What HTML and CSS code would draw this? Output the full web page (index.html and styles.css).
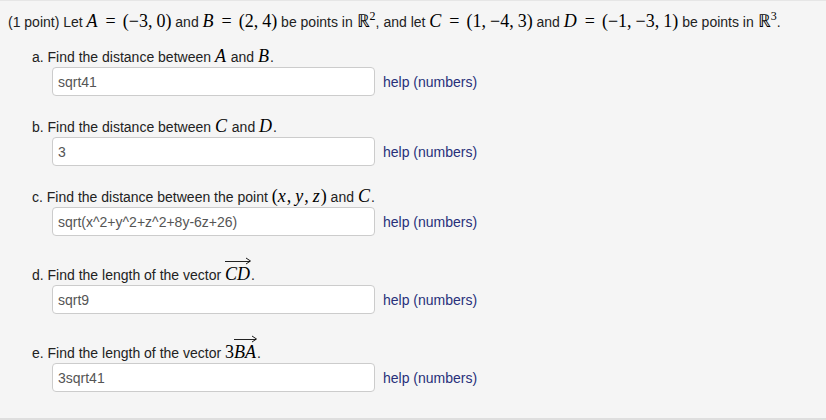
FILE: index.html
```html
<!DOCTYPE html>
<html lang="en">
<head>
  <meta charset="UTF-8">
  <title>Distance and Vectors</title>
  <link rel="stylesheet" href="styles.css">
</head>
<body>

  <div class="problem">

    <!-- Problem statement -->
    <div class="intro">
      (1 point) Let <span class="m"><i>A</i><span class="op">=</span>(−3,<span class="sp"></span>0)</span> and
      <span class="m"><i>B</i><span class="op">=</span>(2,<span class="sp"></span>4)</span> be points in
      <span class="m">ℝ<sup>2</sup></span>, and let
      <span class="m"><i>C</i><span class="op">=</span>(1,<span class="sp"></span>−4,<span class="sp"></span>3)</span> and
      <span class="m"><i>D</i><span class="op">=</span>(−1,<span class="sp"></span>−3,<span class="sp"></span>1)</span> be points in
      <span class="m">ℝ<sup>3</sup></span>.
    </div>

    <div class="parts">

      <div class="part">
        <div class="label">a. Find the distance between <span class="m"><i>A</i></span> and <span class="m"><i>B</i></span>.</div>
        <div class="answer">
          <input class="box" type="text" value="sqrt41">
          <span class="help">help (numbers)</span>
        </div>
      </div>

      <div class="part">
        <div class="label">b. Find the distance between <span class="m"><i>C</i></span> and <span class="m"><i>D</i></span>.</div>
        <div class="answer">
          <input class="box" type="text" value="3">
          <span class="help">help (numbers)</span>
        </div>
      </div>

      <div class="part">
        <div class="label">c. Find the distance between the point <span class="m">(<i>x</i>,<span class="sp"></span><i>y</i>,<span class="sp"></span><i>z</i>)</span> and <span class="m"><i>C</i></span>.</div>
        <div class="answer">
          <input class="box" type="text" value="sqrt(x^2+y^2+z^2+8y-6z+26)">
          <span class="help">help (numbers)</span>
        </div>
      </div>

      <div class="part">
        <div class="label">d. Find the length of the vector <span class="m vec"><span class="arrow"><span class="shaft"></span><svg width="5" height="8" viewBox="0 0 5 8"><path d="M0 1l4.5 3L0 7" fill="none" stroke="#000" stroke-width="0.9"/></svg></span><span class="vec-text"><i>CD</i></span></span>.</div>
        <div class="answer">
          <input class="box" type="text" value="sqrt9">
          <span class="help">help (numbers)</span>
        </div>
      </div>

      <div class="part">
        <div class="label">e. Find the length of the vector <span class="m">3<span class="vec"><span class="arrow"><span class="shaft"></span><svg width="5" height="8" viewBox="0 0 5 8"><path d="M0 1l4.5 3L0 7" fill="none" stroke="#000" stroke-width="0.9"/></svg></span><span class="vec-text"><i>BA</i></span></span></span>.</div>
        <div class="answer">
          <input class="box" type="text" value="3sqrt41">
          <span class="help">help (numbers)</span>
        </div>
      </div>

    </div>
  </div>

</body>
</html>
```

FILE: styles.css
```css
body {
  margin: 0;
  background-color: #f5f5f5;
  font-family: "Liberation Sans", Arial, sans-serif;
  font-size: 14px;
  color: #222;
}
.problem {
  height: 406px;
  padding: 11px 8px 0;
  border-top: 1px solid #e6e6e6;
  border-bottom: 2px solid #dedede;
}
.intro {
  line-height: 20px;
}
.parts {
  margin-top: 15px;
  padding-left: 24px;
}
.part {
  margin-bottom: 21px;
}
.label {
  line-height: 20px;
}
.m {
  font-family: "Liberation Serif", "Times New Roman", serif;
  font-size: 18px;
  line-height: 1;
  color: #000;
  white-space: nowrap;
}
.m i {
  font-style: italic;
  padding-right: 1px;
}
.op {
  padding: 0 7px;
}
.sp {
  display: inline-block;
  width: 4px;
}
.m sup {
  font-size: 12px;
  line-height: 0;
}
.vec {
  display: inline-block;
  line-height: 1;
}
.arrow {
  display: flex;
  align-items: center;
  height: 8px;
  margin-bottom: 1px;
}
.shaft {
  flex: 1;
  height: 0;
  border-top: 1px solid #222;
  margin-right: -4px;
}
.arrow svg {
  display: block;
}
.vec-text {
  display: block;
  line-height: 17px;
}
.answer {
  display: flex;
  align-items: center;
  gap: 8px;
  padding-left: 20px;
}
.box {
  box-sizing: border-box;
  width: 323px;
  height: 29px;
  margin: 0;
  padding: 0 5px;
  border: 1px solid #cccccc;
  border-radius: 4px;
  background-color: #fff;
  font-family: "Liberation Sans", Arial, sans-serif;
  font-size: 14px;
  color: #555;
}
.help {
  color: #28307a;
}
```
